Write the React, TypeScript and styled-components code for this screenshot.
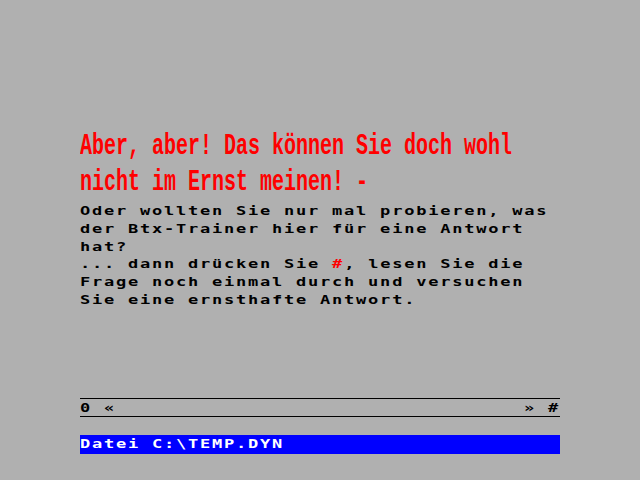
import styled, { createGlobalStyle } from "styled-components";

const GlobalStyle = createGlobalStyle`
  html, body {
    margin: 0;
    padding: 0;
    background: #b0b0b0;
  }
`;

const Screen = styled.div`
  width: 640px;
  height: 480px;
  box-sizing: border-box;
  padding: 131px 80px 0;
  background: #b0b0b0;
  color: #000000;
  font-family: "DejaVu Sans Mono", "Liberation Mono", monospace;
  overflow: hidden;
`;

const Page = styled.div`
  width: 480px;
  display: flex;
  flex-direction: column;
`;

const Heading = styled.div`
  display: flex;
  flex-direction: column;
  color: #ff0000;
  font-family: "Liberation Mono", monospace;
  font-weight: 700;
`;

const HeadingLine = styled.div`
  height: 36px;
  white-space: pre;
`;

/* Btx double height: glyphs stretched down */
const Tall = styled.span`
  display: inline-block;
  font-size: 20px;
  line-height: 20px;
  transform: scaleY(1.5);
  transform-origin: top left;
`;

/* Btx cell: 12px wide, wide squat glyphs */
const Chars = styled.span<{ $lh?: number }>`
  display: inline-block;
  font-size: 17px;
  line-height: ${(p) => p.$lh ?? 20}px;
  font-weight: 700;
  letter-spacing: 1.77px;
  white-space: pre;
  transform: scaleY(0.72);
  transform-origin: top left;
`;

const Body = styled.div`
  display: flex;
  flex-direction: column;
`;

const Line = styled.div`
  height: 17.8px;
`;

const Key = styled.span<{ $color?: string }>`
  color: ${(p) => p.$color ?? "inherit"};
`;

const NavBar = styled.div`
  margin-top: 88px;
  height: 17px;
  border-top: 1px solid #000000;
  border-bottom: 1px solid #000000;
  display: flex;
  justify-content: space-between;
  align-items: flex-start;
  overflow: hidden;
`;

const StatusBar = styled.div`
  margin-top: 18px;
  height: 19px;
  background: #0000ff;
  color: #ffffff;
  overflow: hidden;
`;

const heading = ["Aber, aber! Das können Sie doch wohl", "nicht im Ernst meinen! -"];

export default function App() {
  return (
    <>
      <GlobalStyle />
      <Screen>
        <Page>
          <Heading>
            {heading.map((text) => (
              <HeadingLine key={text}>
                <Tall>{text}</Tall>
              </HeadingLine>
            ))}
          </Heading>
          <Body>
            <Line>
              <Chars>Oder wollten Sie nur mal probieren, was</Chars>
            </Line>
            <Line>
              <Chars>der Btx-Trainer hier für eine Antwort</Chars>
            </Line>
            <Line>
              <Chars>hat?</Chars>
            </Line>
            <Line>
              <Chars>
                ... dann drücken Sie <Key $color="#ff0000">#</Key>, lesen Sie die
              </Chars>
            </Line>
            <Line>
              <Chars>Frage noch einmal durch und versuchen</Chars>
            </Line>
            <Line>
              <Chars>Sie eine ernsthafte Antwort.</Chars>
            </Line>
          </Body>
          <NavBar>
            <Chars $lh={24}>0 «</Chars>
            <Chars $lh={24}>» #</Chars>
          </NavBar>
          <StatusBar>
            <Chars $lh={24}>Datei C:\TEMP.DYN</Chars>
          </StatusBar>
        </Page>
      </Screen>
    </>
  );
}
